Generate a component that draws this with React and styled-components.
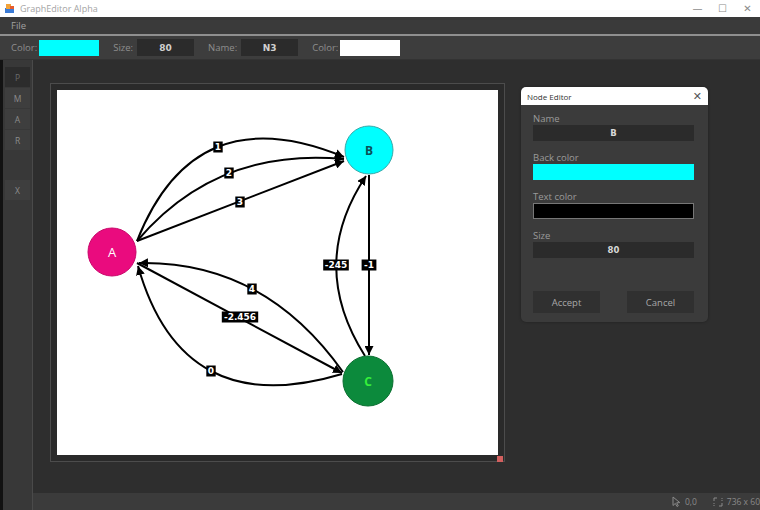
import React from "react";
import styled, { createGlobalStyle } from "styled-components";

const Global = createGlobalStyle`
  html, body { margin: 0; padding: 0; background: #2f2f2f; }
  body { font-family: "Open Sans", "Noto Sans", sans-serif; }
  * { box-sizing: border-box; }
`;

const Window = styled.div`
  width: 760px;
  height: 510px;
  display: flex;
  flex-direction: column;
  overflow: hidden;
  background: #2f2f2f;
`;

const TitleBar = styled.div`
  height: 17px;
  background: #ffffff;
  display: flex;
  align-items: center;
  padding-left: 5px;
  gap: 6px;
`;

const TitleText = styled.span`
  font-size: 9px;
  color: #a4a4a4;
  flex: 1;
`;

const WinControls = styled.div`
  display: flex;
  align-items: center;
  height: 100%;
`;

const WinButton = styled.div`
  width: 25px;
  height: 100%;
  display: flex;
  align-items: center;
  justify-content: center;
  color: #8a8a8a;
  font-size: 10px;
  font-family: "DejaVu Sans", sans-serif;
`;

const MenuBar = styled.div`
  height: 19px;
  background: #3a3a3a;
  border-bottom: 2px solid #8f8f8f;
  display: flex;
  align-items: center;
  padding-left: 11px;
`;

const MenuItem = styled.span`
  font-size: 9.5px;
  color: #a0a0a0;
`;

const Toolbar = styled.div`
  height: 24px;
  background: #3d3d3d;
  display: flex;
  align-items: center;
  padding-left: 11px;
  gap: 14px;
  border-bottom: 1px solid #333;
`;

const Field = styled.div`
  display: flex;
  align-items: center;
  gap: 2px;
`;

const FieldLabel = styled.span`
  font-size: 9.5px;
  color: #8e8e8e;
`;

const Swatch = styled.div`
  width: 60px;
  height: 16px;
  background: ${(p) => p.$color};
`;

const ToolInput = styled.div`
  width: 57px;
  height: 17px;
  margin-left: 2px;
  background: #2b2b2b;
  display: flex;
  align-items: center;
  justify-content: center;
  font-size: 9px;
  font-weight: 700;
  color: #d0d0d0;
  font-family: "DejaVu Sans", sans-serif;
`;

const Body = styled.div`
  flex: 1;
  display: flex;
  border-left: 3px solid #121212;
  min-height: 0;
`;

const Sidebar = styled.div`
  width: 30px;
  background: #383838;
  border-right: 1px solid #4a4a4a;
  display: flex;
  flex-direction: column;
  padding: 7px 0 0 2px;
  gap: 1px;
`;

const SideButton = styled.div`
  width: 25px;
  height: 20px;
  background: ${(p) => (p.$active ? "#2c2c2c" : "#3e3e3e")};
  color: ${(p) => (p.$active ? "#6a6a6a" : "#8c8c8c")};
  font-size: 8.5px;
  display: flex;
  align-items: center;
  justify-content: center;
  margin-top: ${(p) => p.$gapTop || 0}px;
`;

const MainCol = styled.div`
  flex: 1;
  display: flex;
  flex-direction: column;
  min-width: 0;
`;

const Workspace = styled.div`
  flex: 1;
  position: relative;
  background: #2e2e2e;
  padding: 23px 0 0 17px;
`;

const Frame = styled.div`
  position: relative;
  width: 455px;
  height: 379px;
  border: 1px solid #4c4c4c;
  background: #2a2a2a;
  padding: 6px;
`;

const Canvas = styled.div`
  width: 441px;
  height: 365px;
  background: #ffffff;
`;

const Handle = styled.div`
  position: absolute;
  right: 1px;
  bottom: -1px;
  width: 6px;
  height: 6px;
  background: #d2605f;
`;

const StatusBar = styled.div`
  height: 17px;
  background: #3b3b3b;
  display: flex;
  align-items: center;
  justify-content: flex-end;
  gap: 16px;
  padding-right: 0;
  white-space: nowrap;
  overflow: hidden;
`;

const StatusItem = styled.div`
  display: flex;
  align-items: center;
  gap: 4px;
  font-size: 8.5px;
  color: #8a8a8a;
`;

const Dialog = styled.div`
  position: absolute;
  left: 488px;
  top: 27px;
  width: 187px;
  height: 235px;
  background: #3b3b3b;
  border-radius: 5px;
  overflow: hidden;
  display: flex;
  flex-direction: column;
  box-shadow: 0 0 3px rgba(0, 0, 0, 0.35);
`;

const DialogTitle = styled.div`
  height: 18px;
  background: #ffffff;
  display: flex;
  align-items: center;
  justify-content: space-between;
  padding: 0 6px 0 6px;
`;

const DialogTitleText = styled.span`
  font-size: 8px;
  color: #333;
`;

const CloseX = styled.span`
  font-size: 11px;
  color: #555;
  font-family: "DejaVu Sans", sans-serif;
`;

const DialogBody = styled.div`
  flex: 1;
  display: flex;
  flex-direction: column;
  padding: 7px 14px 9px 12px;
`;

const DGroup = styled.div`
  display: flex;
  flex-direction: column;
  margin-bottom: 10px;
`;

const DLabel = styled.span`
  font-size: 9.5px;
  line-height: 13px;
  color: #9a9a9a;
`;

const DInput = styled.div`
  height: 16px;
  background: #2b2b2b;
  display: flex;
  align-items: center;
  justify-content: center;
  font-size: 8.5px;
  font-weight: 700;
  color: #d8d8d8;
  font-family: "DejaVu Sans", sans-serif;
`;

const DColor = styled.div`
  height: 16px;
  background: ${(p) => p.$color};
  border: ${(p) => (p.$bordered ? "1px solid #777" : "none")};
`;

const ButtonRow = styled.div`
  margin-top: auto;
  display: flex;
  justify-content: space-between;
`;

const DButton = styled.div`
  width: 67px;
  height: 22px;
  background: #303030;
  display: flex;
  align-items: center;
  justify-content: center;
  font-size: 9.5px;
  color: #a8a8a8;
`;

const AppIcon = () => (
  <svg width="9" height="9" viewBox="0 0 9 9">
    <rect x="0" y="4" width="9" height="5" fill="#3b7bd6" />
    <rect x="1" y="0" width="5" height="5" fill="#f2a23a" />
    <rect x="5" y="2" width="4" height="3" fill="#e65b2c" />
  </svg>
);

const edges = [
  { d: "M80,151 Q137.5,5 287,67", label: "1", lx: 161, ly: 57 },
  { d: "M80,151 Q159.5,57 287,69", label: "2", lx: 172, ly: 83 },
  { d: "M80,151 L287,71", label: "3", lx: 183, ly: 112 },
  { d: "M286,282 Q207,170.5 82,173", label: "4", lx: 195, ly: 199 },
  { d: "M80,173 L285,283", label: "-2.456", lx: 183, ly: 227 },
  { d: "M285,284 Q125,332 81,176", label: "0", lx: 154, ly: 281 },
  { d: "M308,266 Q250,174.5 309,86", label: "-245", lx: 279, ly: 175 },
  { d: "M312,85 L312,265", label: "-1", lx: 312, ly: 175 },
];

const Graph = () => (
  <svg width="441" height="365" viewBox="0 0 441 365">
    <defs>
      <marker
        id="arr"
        viewBox="0 0 10 10"
        refX="10"
        refY="5"
        markerWidth="9"
        markerHeight="9"
        markerUnits="userSpaceOnUse"
        orient="auto"
      >
        <path d="M0,0 L10,5 L0,10 z" fill="#000" />
      </marker>
    </defs>
    {edges.map((e, i) => (
      <path key={i} d={e.d} fill="none" stroke="#000" strokeWidth="2" markerEnd="url(#arr)" />
    ))}
    <circle cx="55" cy="162" r="24" fill="#ea0b7e" stroke="#c9086b" strokeWidth="1" />
    <circle cx="312" cy="60" r="24" fill="#00ffff" stroke="#39a9a9" strokeWidth="1" />
    <circle cx="311" cy="291" r="25" fill="#0c8a3c" stroke="#0a6f30" strokeWidth="1" />
    <text x="55" y="167" textAnchor="middle" fontSize="13" fill="#ffffff" fontFamily="Open Sans, sans-serif">A</text>
    <text x="312" y="65" textAnchor="middle" fontSize="12" fontWeight="700" fill="#0b4f57" fontFamily="Open Sans, sans-serif">B</text>
    <text x="311" y="296" textAnchor="middle" fontSize="12" fontWeight="700" fill="#36f03a" fontFamily="Open Sans, sans-serif">C</text>
    {edges.map((e, i) => {
      const w = e.label.length * 5.4 + 4;
      return (
        <g key={"l" + i}>
          <rect x={e.lx - w / 2} y={e.ly - 5.5} width={w} height="11" fill="#000" />
          <text
            x={e.lx}
            y={e.ly + 3.3}
            textAnchor="middle"
            fontSize="9"
            fontWeight="700"
            fill="#fff"
            fontFamily="DejaVu Sans, sans-serif"
          >
            {e.label}
          </text>
        </g>
      );
    })}
  </svg>
);

const CursorIcon = () => (
  <svg width="9" height="11" viewBox="0 0 9 11">
    <path d="M1,1 L1,9.5 L3.3,7.4 L5,10.5 L6.3,9.8 L4.7,6.8 L7.8,6.6 Z" fill="none" stroke="#8a8a8a" strokeWidth="1" />
  </svg>
);

const SizeIcon = () => (
  <svg width="10" height="10" viewBox="0 0 10 10">
    <path d="M1,4 L1,1 L4,1 M6,9 L9,9 L9,6" fill="none" stroke="#8a8a8a" strokeWidth="1" />
    <path d="M1,6 L1,9 M9,4 L9,1" fill="none" stroke="#8a8a8a" strokeWidth="1" strokeDasharray="1 1" />
  </svg>
);

export default function App() {
  return (
    <>
      <Global />
      <Window>
        <TitleBar>
          <AppIcon />
          <TitleText>GraphEditor Alpha</TitleText>
          <WinControls>
            <WinButton>—</WinButton>
            <WinButton>☐</WinButton>
            <WinButton>✕</WinButton>
          </WinControls>
        </TitleBar>
        <MenuBar>
          <MenuItem>File</MenuItem>
        </MenuBar>
        <Toolbar>
          <Field>
            <FieldLabel>Color:</FieldLabel>
            <Swatch $color="#00ffff" />
          </Field>
          <Field>
            <FieldLabel>Size:</FieldLabel>
            <ToolInput>80</ToolInput>
          </Field>
          <Field>
            <FieldLabel>Name:</FieldLabel>
            <ToolInput>N3</ToolInput>
          </Field>
          <Field>
            <FieldLabel>Color:</FieldLabel>
            <Swatch $color="#ffffff" />
          </Field>
        </Toolbar>
        <Body>
          <Sidebar>
            <SideButton $active>P</SideButton>
            <SideButton>M</SideButton>
            <SideButton>A</SideButton>
            <SideButton>R</SideButton>
            <SideButton $gapTop={29}>X</SideButton>
          </Sidebar>
          <MainCol>
            <Workspace>
              <Frame>
                <Canvas>
                  <Graph />
                </Canvas>
                <Handle />
              </Frame>
              <Dialog>
                <DialogTitle>
                  <DialogTitleText>Node Editor</DialogTitleText>
                  <CloseX>✕</CloseX>
                </DialogTitle>
                <DialogBody>
                  <DGroup>
                    <DLabel>Name</DLabel>
                    <DInput>B</DInput>
                  </DGroup>
                  <DGroup>
                    <DLabel>Back color</DLabel>
                    <DColor $color="#00ffff" />
                  </DGroup>
                  <DGroup>
                    <DLabel>Text color</DLabel>
                    <DColor $color="#000000" $bordered />
                  </DGroup>
                  <DGroup>
                    <DLabel>Size</DLabel>
                    <DInput>80</DInput>
                  </DGroup>
                  <ButtonRow>
                    <DButton>Accept</DButton>
                    <DButton>Cancel</DButton>
                  </ButtonRow>
                </DialogBody>
              </Dialog>
            </Workspace>
            <StatusBar>
              <StatusItem>
                <CursorIcon />
                <span>0,0</span>
              </StatusItem>
              <StatusItem>
                <SizeIcon />
                <span>736 x 60</span>
              </StatusItem>
            </StatusBar>
          </MainCol>
        </Body>
      </Window>
    </>
  );
}
